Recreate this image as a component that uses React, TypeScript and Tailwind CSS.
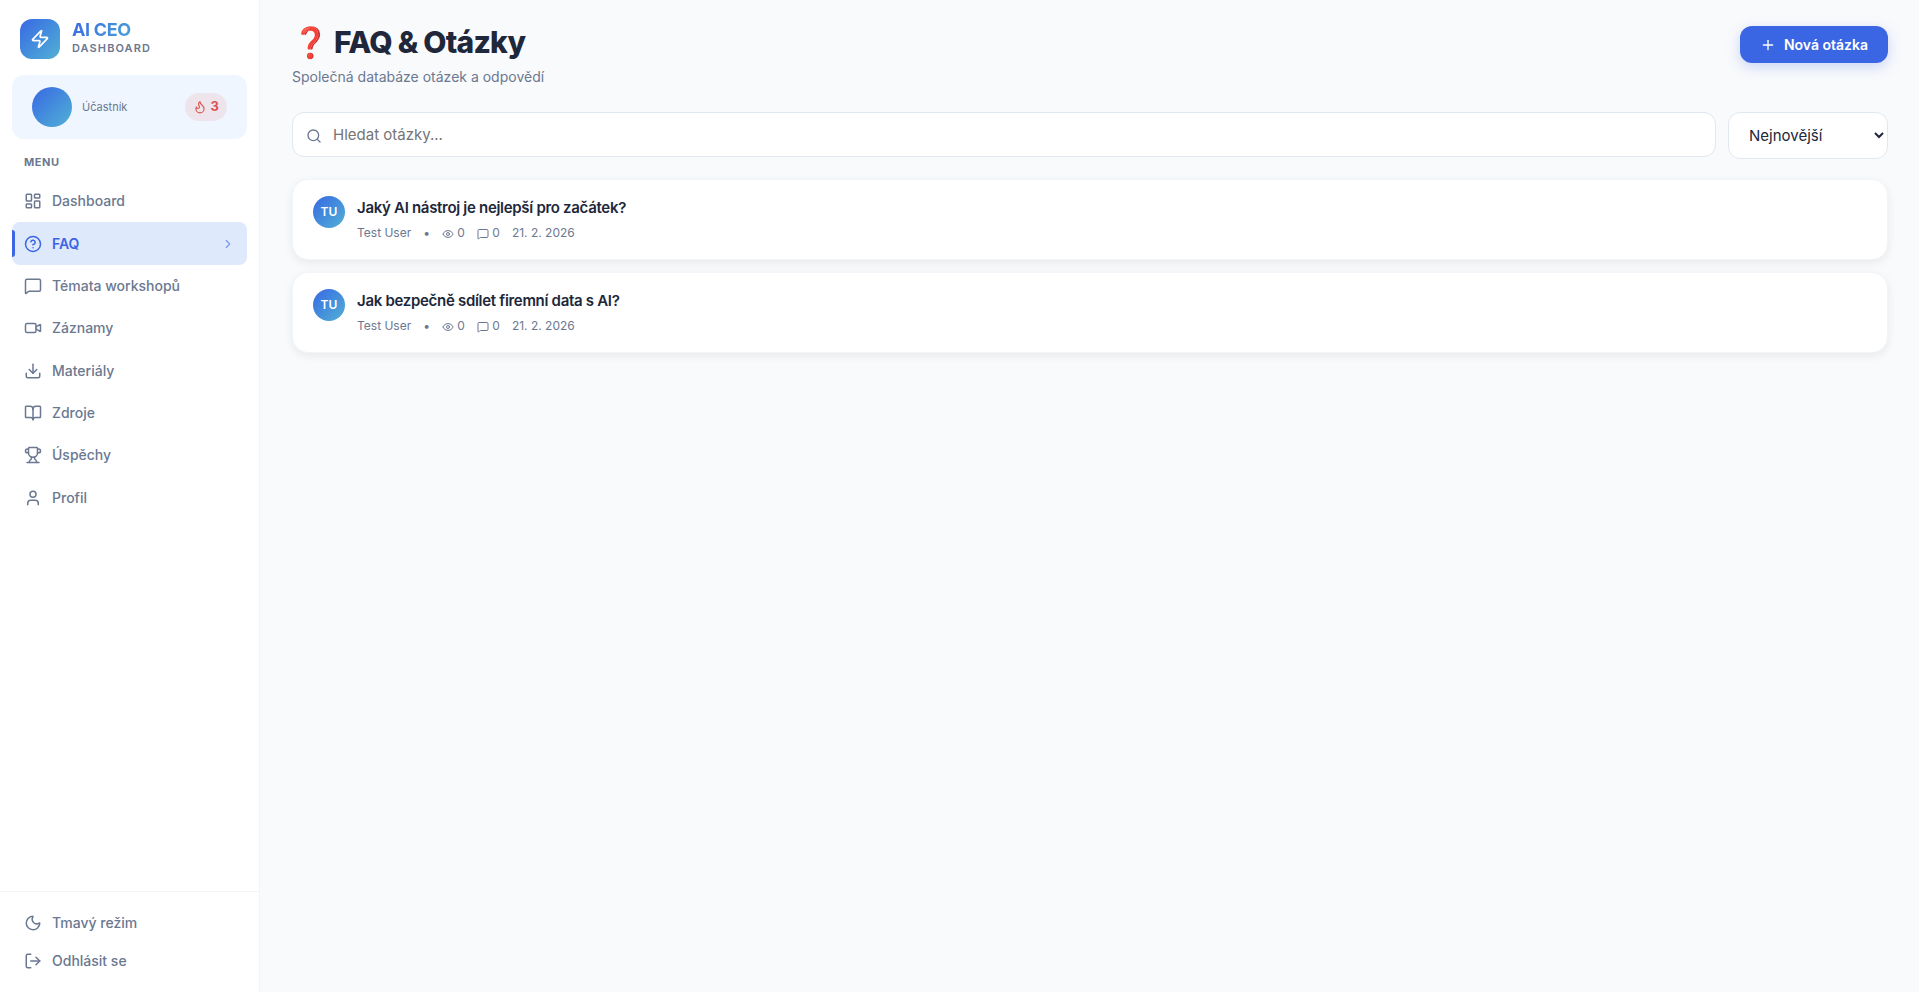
import {
  BookOpen,
  ChevronRight,
  CircleQuestionMark,
  Download,
  Eye,
  Flame,
  LayoutDashboard,
  LogOut,
  MessageSquare,
  Moon,
  Plus,
  Search,
  Trophy,
  User,
  Video,
  Zap,
} from 'lucide-react'

const navItems = [
  { label: 'Dashboard', icon: LayoutDashboard },
  { label: 'FAQ', icon: CircleQuestionMark, active: true },
  { label: 'Témata workshopů', icon: MessageSquare },
  { label: 'Záznamy', icon: Video },
  { label: 'Materiály', icon: Download },
  { label: 'Zdroje', icon: BookOpen },
  { label: 'Úspěchy', icon: Trophy },
  { label: 'Profil', icon: User },
]

const questions = [
  { id: 1, title: 'Jaký AI nástroj je nejlepší pro začátek?', author: 'Test User', views: 0, answers: 0, date: '21. 2. 2026' },
  { id: 2, title: 'Jak bezpečně sdílet firemní data s AI?', author: 'Test User', views: 0, answers: 0, date: '21. 2. 2026' },
]

function Sidebar() {
  return (
    <aside className="sticky top-0 flex h-screen w-[260px] shrink-0 flex-col border-r border-slate-100 bg-white">
      {/* Logo */}
      <div className="flex items-center gap-3 px-5 pt-[19px] pb-4">
        <div className="flex size-10 items-center justify-center rounded-xl bg-linear-135 from-[#3b66e3] to-[#54b0d3] text-white">
          <Zap size={20} />
        </div>
        <div className="flex flex-col pb-[2px]">
          <span className="bg-linear-135 from-[#3b66e3] to-[#54b0d3] bg-clip-text text-lg leading-5 font-bold tracking-[-0.02em] text-transparent">
            AI CEO
          </span>
          <span className="text-[11px] leading-4 font-semibold tracking-[0.1em] text-[#6b7890]">DASHBOARD</span>
        </div>
      </div>

      {/* User card */}
      <div className="mx-3 flex items-center rounded-xl bg-[#eff6ff] px-5 py-3">
        <div className="size-10 rounded-full bg-linear-135 from-[#3b66e3] to-[#54b0d3]" />
        <span className="ml-[10px] flex-1 text-[11px] text-[#6b7890]">Účastník</span>
        <span className="flex h-7 items-center gap-1 rounded-full bg-[#ede5eb] px-2 text-[13px] font-bold text-[#dc5450]">
          <Flame size={14} />
          3
        </span>
      </div>

      <nav className="flex flex-col px-3 pt-[14px]">
        <h2 className="mb-[9px] px-3 text-[11px] leading-[18px] font-bold tracking-[0.05em] text-[#6b7890]">MENU</h2>
        <div className="grid h-[339px] auto-rows-fr">
          {navItems.map(({ label, icon: Icon, active }) => (
            <a
              key={label}
              href="#"
              className={
                active
                  ? 'relative flex items-center gap-[10px] rounded-lg bg-[#dee9fc] px-3 text-sm font-semibold text-[#3b66e3]'
                  : 'flex items-center gap-[10px] rounded-lg px-3 text-sm font-medium text-[#6b7890]'
              }
            >
              {active && <span className="absolute top-2 bottom-2 left-0 w-[3px] rounded-r-sm bg-[#3b66e3]" />}
              <Icon size={18} />
              <span className="flex-1">{label}</span>
              {active && <ChevronRight size={14} className="opacity-60" />}
            </a>
          ))}
        </div>
      </nav>

      {/* Footer */}
      <div className="mt-auto flex flex-col border-t border-slate-100 p-3">
        <button className="flex h-[38px] items-center gap-[10px] px-3 text-sm font-medium text-[#6b7890]">
          <Moon size={18} />
          Tmavý režim
        </button>
        <button className="flex h-[38px] items-center gap-[10px] px-3 text-sm font-medium text-[#6b7890]">
          <LogOut size={18} />
          Odhlásit se
        </button>
      </div>
    </aside>
  )
}

export default function App() {
  return (
    <div className="flex min-h-screen bg-[#f9fafc] font-['Inter','Noto_Sans',sans-serif] text-[#20273a]">
      <Sidebar />

      <main className="flex min-w-0 flex-1 flex-col py-6 pr-[31px] pl-8">
        <header className="mb-6 flex items-start justify-between">
          <div>
            <h1 className="text-3xl leading-9 font-extrabold tracking-tight">❓ FAQ &amp; Otázky</h1>
            <p className="mt-[6px] text-sm leading-[22px] text-[#6b7890]">Společná databáze otázek a odpovědí</p>
          </div>
          <button className="mt-[2px] flex h-[37px] items-center gap-2 rounded-xl bg-[#3b66e3] px-5 text-sm font-semibold text-white shadow-[0_4px_14px_rgba(59,102,227,0.25)]">
            <Plus size={16} />
            Nová otázka
          </button>
        </header>

        {/* Search and sort */}
        <div className="mb-5 flex items-start gap-3">
          <div className="relative flex-1">
            <Search size={16} className="absolute top-4 left-[14px] text-[#6b7890]" />
            <input
              type="text"
              aria-label="Hledat otázky"
              placeholder="Hledat otázky..."
              className="h-[45px] w-full rounded-xl border border-slate-200 bg-white pr-4 pl-10 text-[15px] placeholder:text-[#757575]"
            />
          </div>
          <select
            aria-label="Řazení"
            className="h-[47px] w-40 rounded-xl border border-slate-200 bg-white px-4 text-[15px]"
          >
            <option>Nejnovější</option>
          </select>
        </div>

        {/* Question list */}
        <div className="flex flex-col gap-3">
          {questions.map((q) => (
            <article
              key={q.id}
              className="flex items-start gap-3 rounded-2xl border border-slate-100 bg-white px-5 pt-4 pb-[17px] shadow-[0_3px_10px_rgba(0,0,0,0.07)]"
            >
              <div className="flex size-8 items-center justify-center rounded-full bg-linear-135 from-[#3b66e3] to-[#54b0d3] text-xs font-semibold text-white">
                TU
              </div>
              <div>
                <h3 className="text-[15px] leading-6 font-semibold tracking-[-0.02em]">{q.title}</h3>
                <div className="mt-1 flex items-center gap-3 text-xs leading-[18px] text-[#6b7890]">
                  <span>{q.author}</span>
                  <span>•</span>
                  <span>
                    <Eye size={12} className="inline align-middle" /> {q.views}
                  </span>
                  <span>
                    <MessageSquare size={12} className="inline align-middle" /> {q.answers}
                  </span>
                  <span>{q.date}</span>
                </div>
              </div>
            </article>
          ))}
        </div>
      </main>
    </div>
  )
}
